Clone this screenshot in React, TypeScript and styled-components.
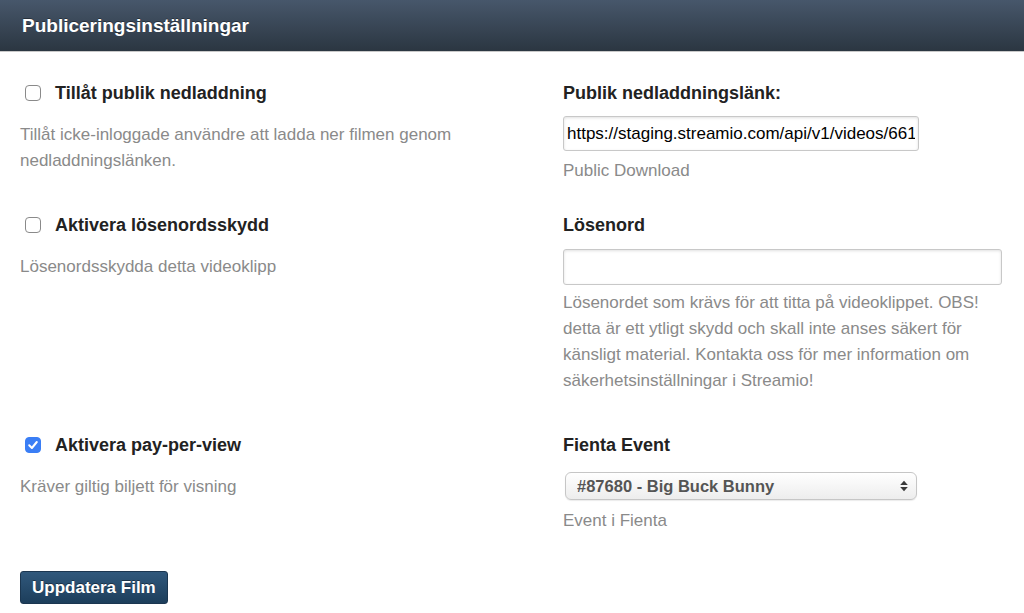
import React from "react";
import styled, { createGlobalStyle } from "styled-components";

const Global = createGlobalStyle`
  html, body { margin: 0; padding: 0; background: #fff; }
  body { font-family: "Liberation Sans", Arial, Helvetica, sans-serif; }
  * { box-sizing: border-box; }
`;

const Header = styled.header`
  height: 52px;
  border-bottom: 1px solid #c9c9c9;
  background: linear-gradient(#47576b, #2b3641);
  padding: 0 22px;
  display: flex;
  align-items: center;
`;

const Title = styled.h1`
  margin: 0;
  font-size: 19px;
  font-weight: 700;
  color: #fff;
  text-shadow: 0 -1px 0 rgba(0, 0, 0, 0.35);
`;

const Form = styled.form`
  padding: 29px 20px 0;
`;

const Row = styled.div<{ $space: number }>`
  display: grid;
  grid-template-columns: 543px 439px;
  margin-bottom: ${(p) => p.$space}px;
`;

const Cell = styled.div`
  display: flex;
  flex-direction: column;
  align-items: flex-start;
`;

const CheckLabel = styled.label`
  display: flex;
  align-items: center;
  gap: 14px;
  padding-left: 5px;
  font-size: 18px;
  font-weight: 700;
  line-height: 24px;
  color: #222;
`;

const Box = styled.input.attrs({ type: "checkbox" })`
  appearance: none;
  margin: 0;
  width: 16px;
  height: 16px;
  border: 1px solid #8a8a8a;
  border-radius: 4px;
  background: #fff;
  display: grid;
  place-items: center;
  &:checked {
    background: #3a7ef5;
    border-color: #3a7ef5;
  }
`;

const BoxWrap = styled.span`
  position: relative;
  display: inline-flex;
`;

const Tick = styled.svg`
  position: absolute;
  left: 2px;
  top: 2px;
  pointer-events: none;
`;

const Desc = styled.p`
  margin: 17px 0 0;
  max-width: 480px;
  font-size: 17px;
  line-height: 26px;
  color: #8a8a8a;
`;

const FieldLabel = styled.label`
  font-size: 18px;
  font-weight: 700;
  line-height: 24px;
  color: #222;
`;

const TextInput = styled.input<{ $w: number; $h: number; $mt: number }>`
  margin-top: ${(p) => p.$mt}px;
  width: ${(p) => p.$w}px;
  height: ${(p) => p.$h}px;
  border: 1px solid #c8c8c8;
  border-radius: 3px;
  padding: 0 3px;
  font-family: "Liberation Sans", Arial, sans-serif;
  font-size: 17px;
  color: #000;
  background: #fff;
  box-shadow: inset 0 1px 3px rgba(0, 0, 0, 0.12);
  outline: none;
`;

const Help = styled.p<{ $mt: number }>`
  margin: ${(p) => p.$mt}px 0 0;
  font-size: 17px;
  line-height: 26px;
  color: #8a8a8a;
`;

const SelectWrap = styled.div`
  position: relative;
  margin-top: 15px;
  margin-left: 2px;
`;

const Select = styled.select`
  appearance: none;
  width: 352px;
  height: 28px;
  border: 1px solid #c6c6c6;
  border-radius: 6px;
  padding: 0 30px 0 11px;
  background: linear-gradient(#ffffff, #ededed);
  box-shadow: 0 1px 1px rgba(0, 0, 0, 0.08);
  font-family: "Liberation Sans", Arial, sans-serif;
  font-size: 16.5px;
  font-weight: 700;
  color: #555;
  outline: none;
`;

const Arrows = styled.svg`
  position: absolute;
  right: 9px;
  top: 8px;
  pointer-events: none;
`;

const Button = styled.button`
  height: 33px;
  padding: 0 11px;
  border: 1px solid #1b3650;
  border-radius: 3px;
  background: linear-gradient(#30587c, #1d3e5b);
  color: #fff;
  font-family: "Liberation Sans", Arial, sans-serif;
  font-size: 17px;
  font-weight: 700;
  text-shadow: 0 -1px 0 rgba(0, 0, 0, 0.4);
`;

function Check({ checked, label }: { checked?: boolean; label: string }) {
  return (
    <CheckLabel>
      <BoxWrap>
        <Box defaultChecked={checked} />
        {checked && (
          <Tick width="12" height="12" viewBox="0 0 12 12">
            <path d="M2.2 6.3 L4.9 9 L9.8 3" fill="none" stroke="#fff" strokeWidth="2" strokeLinecap="round" strokeLinejoin="round" />
          </Tick>
        )}
      </BoxWrap>
      {label}
    </CheckLabel>
  );
}

export default function App() {
  return (
    <>
      <Global />
      <Header>
        <Title>Publiceringsinställningar</Title>
      </Header>
      <Form onSubmit={(e) => e.preventDefault()}>
        <Row $space={29}>
          <Cell>
            <Check label="Tillåt publik nedladdning" />
            <Desc>Tillåt icke-inloggade användre att ladda ner filmen genom nedladdningslänken.</Desc>
          </Cell>
          <Cell>
            <FieldLabel>Publik nedladdningslänk:</FieldLabel>
            <TextInput $w={356} $h={35} $mt={11} readOnly value="https://staging.streamio.com/api/v1/videos/6613a1b2c3d4e5f6a7b8c9d0/public_download" />
            <Help $mt={7}>Public Download</Help>
          </Cell>
        </Row>
        <Row $space={39}>
          <Cell>
            <Check label="Aktivera lösenordsskydd" />
            <Desc>Lösenordsskydda detta videoklipp</Desc>
          </Cell>
          <Cell>
            <FieldLabel>Lösenord</FieldLabel>
            <TextInput $w={439} $h={36} $mt={12} type="password" />
            <Help $mt={5}>
              Lösenordet som krävs för att titta på videoklippet. OBS! detta är ett ytligt skydd och skall inte anses säkert för känsligt material. Kontakta oss för mer information om säkerhetsinställningar i Streamio!
            </Help>
          </Cell>
        </Row>
        <Row $space={37}>
          <Cell>
            <Check checked label="Aktivera pay-per-view" />
            <Desc>Kräver giltig biljett för visning</Desc>
          </Cell>
          <Cell>
            <FieldLabel>Fienta Event</FieldLabel>
            <SelectWrap>
              <Select defaultValue="87680">
                <option value="87680">#87680 - Big Buck Bunny</option>
              </Select>
              <Arrows width="8" height="12" viewBox="0 0 8 12">
                <path d="M4 0.8 L7.8 5 L0.2 5 Z" fill="#3a3a3a" />
                <path d="M4 11.2 L7.8 7 L0.2 7 Z" fill="#3a3a3a" />
              </Arrows>
            </SelectWrap>
            <Help $mt={8}>Event i Fienta</Help>
          </Cell>
        </Row>
        <Button type="submit">Uppdatera Film</Button>
      </Form>
    </>
  );
}
